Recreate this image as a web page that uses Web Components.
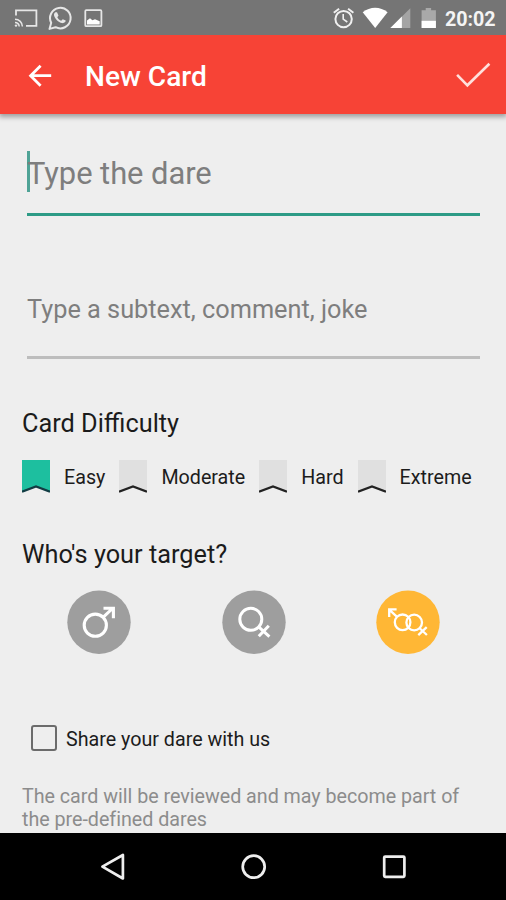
<!DOCTYPE html>
<html lang="en">
<head>
<meta charset="utf-8">
<title>New Card</title>
<style>
html, body { margin: 0; height: 100%; }
body { font-family: Roboto, "Noto Sans", sans-serif; background: #eeeeee; overflow: hidden; }
</style>
</head>
<body>
<new-card-screen></new-card-screen>
<script>
const define = (name, html) => customElements.define(name, class extends HTMLElement {
  constructor() {
    super();
    const t = document.createElement('template');
    t.innerHTML = typeof html === 'function' ? html(this) : html;
    this.attachShadow({ mode: 'open' }).append(t.content.cloneNode(true));
  }
});

define('status-bar', `
<style>
:host { display: flex; align-items: center; box-sizing: border-box; height: 35px; flex: none; background: #757575; color: #f4f4f4; position: relative; z-index: 2; }
svg { display: block; flex: none; }
span { font-size: 19.7px; font-weight: 700; line-height: 35px; margin-left: 9px; padding-top: 3px; letter-spacing: -.05px; }
</style>
<svg width="110" height="35" fill="none" stroke="#e6e6e6" stroke-width="1.8">
  <path d="M16 15.5V10.4H36.4V25.9H26"/>
  <path d="M15 19.2A7.4 7.4 0 0 1 22.4 26.6M15 22.4A4.2 4.2 0 0 1 19.2 26.6" stroke-width="1.5"/>
  <circle cx="16" cy="25.6" r="1.2" fill="#e6e6e6" stroke="none"/>
  <path d="M49.5 28.9L51.2 22.8A10.3 10.3 0 1 1 55.6 27.2Z" stroke-width="2" stroke-linejoin="round"/>
  <path d="M55.4 12.3L57 12.2L58.5 15.5L57.3 17.2C58.2 18.9 59.5 20 61.2 20.7L62.8 19.2L65.7 20.6C65.8 22.3 64 23.4 62 23.1C58.4 22.4 54.7 18.6 54 15.2C53.9 14 54.4 12.9 55.4 12.3Z" fill="#e6e6e6" stroke="none"/>
  <rect x="85.3" y="10.2" width="16.1" height="16" rx="1"/>
  <path d="M87 24.5V20.5L90 18.2L92.4 20.3L95 19.3L99.7 21.2V24.5Z" fill="#fff" stroke="none"/>
</svg>
<svg width="106" height="35" style="margin-left:220px">
  <g fill="none" stroke="#f0f0f0" stroke-width="2">
    <circle cx="13.6" cy="19.1" r="8.2"/>
    <path d="M3.8 12.7L9.1 8.7M18.1 8.7L23.4 12.7"/>
    <path d="M13.2 14V19.2L17.3 22" stroke-width="1.6"/>
  </g>
  <path d="M32.7 12.2C40 6.2 50.3 6.2 57.6 12.2L45.2 27.9Z" fill="#fff"/>
  <path d="M60.4 28L80.3 8.3V28Z" fill="#a4a4a4"/>
  <path d="M60.4 28L71.9 16.6V28Z" fill="#fff"/>
  <path d="M91.6 10.2H95.7V8H101.1V10.2H105.9V28H91.6Z" fill="#a9a9a9"/>
  <path d="M91.6 20.8H105.9V28H91.6Z" fill="#fff"/>
</svg>
<span>20:02</span>`);

define('app-bar', `
<style>
:host { display: flex; align-items: center; height: 79px; flex: none; background: #f74336; color: #fff; box-shadow: 0 2px 5px 1px rgba(0,0,0,.34); position: relative; z-index: 1; }
h1 { flex: 1; margin: 0; padding-top: 4px; font-size: 28.1px; font-weight: 500; line-height: 36px; }
svg { display: block; fill: none; flex: none; }
.back { margin-left: 26px; margin-right: 31px; }
.done { margin-right: 15px; }
</style>
<svg class="back" width="28" height="28" viewBox="0 0 28 28" stroke="#fff" stroke-width="2.8"><path d="M25.2 14.7H5M14.6 4.7L4.6 14.7L14.6 24.7"/></svg>
<h1><slot></slot></h1>
<svg class="done" width="36" height="28" viewBox="0 0 36 28" stroke="#ffe0dc" stroke-width="2.6"><path d="M2.1 13.8L12.4 24.3L34.4 2.7"/></svg>`);

define('text-field', `
<style>
:host { display: flex; box-sizing: border-box; margin: 0 26px 0 27px; color: #7e7e7e; border-bottom: 3px solid #bdbdbd; }
:host([focused]) { border-color: #2d9b86; }
i { width: 2.5px; height: 41px; margin-right: -2.5px; background: #4fa396; display: none; }
:host([focused]) i { display: block; }
span { line-height: 41px; white-space: pre; padding-top: 1px; }
:host([focused]) span { padding-top: 2px; letter-spacing: -.05px; }
</style>
<i></i><span><slot></slot></span>`);

define('section-title', `
<style>:host { display: block; margin-left: 22px; font-size: 25.3px; line-height: 30px; color: #1b1b1b; }</style><slot></slot>`);

define('difficulty-option', `
<style>
:host { display: flex; align-items: center; height: 34px; font-size: 19.7px; color: #1c1c1c; --ribbon: #e0e0e0; --edge: #222222; }
:host([selected]) { --ribbon: #1dbf9f; --edge: #123c43; }
svg { display: block; margin-right: 14px; }
span { line-height: 34px; padding-top: 2px; }
</style>
<svg width="28" height="34"><path d="M0 0H28V31.5L14 26.5L0 31.5Z" fill="var(--ribbon)"/><path d="M0 31.7L14 26.4L28 31.7" fill="none" stroke="var(--edge)" stroke-width="2.3"/></svg>
<span><slot></slot></span>`);

const glyphs = {
  male: '<g stroke-width="3.1"><circle cx="28.3" cy="35.2" r="11.1"/><path d="M36.3 27.2L46 18M36.5 18.2H46.4V28.2"/></g>',
  female: '<g stroke-width="3"><circle cx="28.8" cy="29.3" r="11"/><path d="M36.4 36.6L47.4 46.6M46.8 35.7L36.8 46.2"/></g>',
  both: '<g stroke-width="2.3"><circle cx="26.6" cy="32.3" r="7.8"/><circle cx="38.2" cy="32.5" r="7.8"/><path d="M20.8 26.6L13.2 19.6M13.2 27V19.4H20.6M43.4 38L50.9 45M50.7 37.2L42.3 45.2"/></g>'
};
define('target-button', el => `
<style>
:host { display: block; width: 64px; height: 64px; color: #9e9e9e; }
:host([selected]) { color: #ffb735; }
svg { display: block; }
</style>
<svg width="64" height="64" fill="none" stroke="#fff"><circle cx="32" cy="32.2" r="31.7" fill="currentColor" stroke="none"/>${glyphs[el.getAttribute('kind')] || ''}</svg>`);

define('check-option', `
<style>
:host { display: flex; align-items: center; margin-left: 31px; height: 26px; font-size: 19.7px; color: #1c1c1c; }
i { box-sizing: border-box; width: 26px; height: 26px; border: 2.5px solid #6b6b6b; border-radius: 3px; margin-right: 9px; }
span { padding-top: 2px; }
</style>
<i></i><span><slot></slot></span>`);

define('nav-bar', `
<style>
:host { display: flex; justify-content: space-between; align-items: center; box-sizing: border-box; height: 67px; flex: none; background: #000; padding: 0 98px 0 100px; }
svg { display: block; fill: none; stroke: #eee; stroke-width: 2.7; stroke-linejoin: round; }
</style>
<svg width="28" height="28"><path d="M2.4 13.7L22.9 2V25.5Z"/></svg>
<svg width="28" height="28"><circle cx="13.7" cy="13.7" r="11"/></svg>
<svg width="28" height="28"><rect x="4.2" y="3.6" width="20.2" height="20.2" rx="1"/></svg>`);

define('new-card-screen', `
<style>
:host { display: flex; flex-direction: column; height: 100vh; background: #eeeeee; }
main { flex: 1; min-height: 0; display: flex; flex-direction: column; }
.dare { margin-top: 37px; height: 65px; font-size: 30.9px; }
.sub { margin-top: 72px; height: 71px; font-size: 25.3px; }
.levels { display: flex; gap: 14px; margin: 21px 0 0 22px; }
.targets { display: flex; justify-content: space-between; margin: 20px 66px 0 67px; }
p { margin: 34px 22px 0; font-size: 19.7px; line-height: 23px; letter-spacing: -.02px; color: #8c8c8c; }
</style>
<status-bar></status-bar>
<app-bar>New Card</app-bar>
<main>
  <text-field class="dare" focused>Type the dare</text-field>
  <text-field class="sub">Type a subtext, comment, joke</text-field>
  <section-title style="margin-top:50px">Card Difficulty</section-title>
  <div class="levels">
    <difficulty-option selected>Easy</difficulty-option>
    <difficulty-option>Moderate</difficulty-option>
    <difficulty-option>Hard</difficulty-option>
    <difficulty-option>Extreme</difficulty-option>
  </div>
  <section-title style="margin-top:46px">Who's your target?</section-title>
  <div class="targets">
    <target-button kind="male"></target-button>
    <target-button kind="female"></target-button>
    <target-button kind="both" selected></target-button>
  </div>
  <check-option style="margin-top:71px">Share your dare with us</check-option>
  <p>The card will be reviewed and may become part of the pre-defined dares</p>
</main>
<nav-bar></nav-bar>`);
</script>
</body>
</html>
